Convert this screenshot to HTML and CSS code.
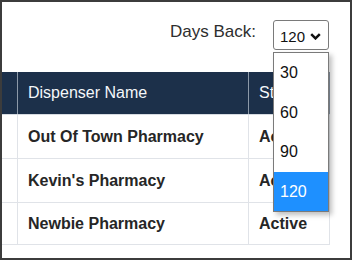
FILE: index.html
```html
<!DOCTYPE html>
<html>
<head>
<meta charset="utf-8">
<link rel="stylesheet" href="styles.css">
</head>
<body>
<div class="frame">
  <div class="toolbar">
    <span class="label">Days Back:</span>
    <div class="select-wrap">
      <div class="select">
        <span class="value">120</span>
        <svg class="chev" width="11" height="7" viewBox="0 0 11 7"><path d="M1.2 1.2 L5.5 5.4 L9.8 1.2" fill="none" stroke="#111" stroke-width="2.5"/></svg>
      </div>
      <ul class="options">
        <li class="opt">30</li>
        <li class="opt">60</li>
        <li class="opt">90</li>
        <li class="opt selected">120</li>
      </ul>
    </div>
  </div>
  <div class="table">
    <div class="row head">
      <div class="cell c1"></div>
      <div class="cell c2">Dispenser Name</div>
      <div class="cell c3">Status</div>
    </div>
    <div class="row">
      <div class="cell c1"></div>
      <div class="cell c2">Out Of Town Pharmacy</div>
      <div class="cell c3">Active</div>
    </div>
    <div class="row">
      <div class="cell c1"></div>
      <div class="cell c2">Kevin's Pharmacy</div>
      <div class="cell c3">Active</div>
    </div>
    <div class="row last">
      <div class="cell c1"></div>
      <div class="cell c2">Newbie Pharmacy</div>
      <div class="cell c3">Active</div>
    </div>
  </div>
</div>
</body>
</html>
```

FILE: styles.css
```css
html, body {
  margin: 0;
  padding: 0;
  background: #fff;
}
.frame {
  width: 352px;
  height: 260px;
  box-sizing: border-box;
  border: 2px solid #3c3c3c;
  overflow: hidden;
  font-family: "Liberation Sans", Arial, sans-serif;
  color: #222;
}
.toolbar {
  display: flex;
  justify-content: flex-end;
  align-items: center;
  padding: 18px 21px 0 0;
  height: 30px;
}
.label {
  font-size: 17px;
  color: #2e2e2e;
  margin-right: 17px;
  margin-top: -6px;
}
.select-wrap {
  position: relative;
  width: 56px;
  height: 30px;
}
.select {
  box-sizing: border-box;
  width: 56px;
  height: 30px;
  border: 1px solid #7a7a7a;
  border-radius: 3px;
  display: flex;
  align-items: center;
  padding: 2px 7px 0 6px;
  font-size: 15px;
  color: #111;
  justify-content: space-between;
}
.chev {
  margin-top: 1px;
}
.options {
  position: absolute;
  left: 0;
  top: 32px;
  width: 56px;
  box-sizing: border-box;
  margin: 0;
  padding: 0;
  list-style: none;
  background: #fff;
  border: 1px solid #7a7a7a;
  box-shadow: 3px 3px 5px rgba(0,0,0,0.25);
  z-index: 2;
}
.opt {
  height: 39.5px;
  line-height: 39.5px;
  padding-left: 6px;
  font-size: 16px;
  color: #111;
}
.opt.selected {
  background: #1e90ff;
  color: #fff;
}
.table {
  margin-top: 22px;
  width: 328px;
}
.row {
  display: grid;
  grid-template-columns: 16px 231px 81px;
  height: 44px;
  border-bottom: 1px solid #e0e3e8;
  box-sizing: border-box;
}
.row.last {
  height: 42px;
}
.row.head {
  height: 43px;
  background: #1c304a;
  color: #f4f7fa;
  border-bottom: 1px solid #d6dbe1;
}
.cell {
  box-sizing: border-box;
  border-right: 1px solid #e0e3e8;
  display: flex;
  align-items: center;
  padding-left: 10px;
  font-size: 16px;
  font-weight: bold;
  color: #262626;
  white-space: nowrap;
  overflow: hidden;
}
.row.head .cell {
  font-weight: normal;
  color: #f4f7fa;
  border-right-color: #8c99a8;
}
.c1 {
  padding: 0;
}
```
